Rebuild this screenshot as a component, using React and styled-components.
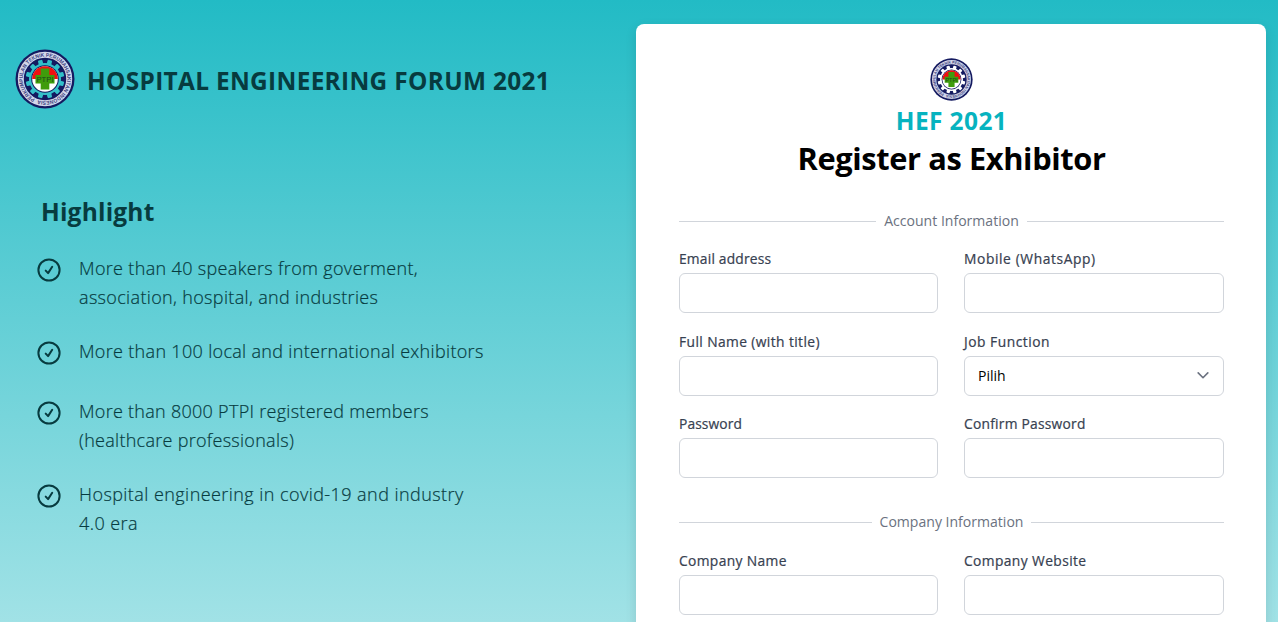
import React, { useId } from 'react';
import styled, { createGlobalStyle } from 'styled-components';

const GlobalStyle = createGlobalStyle`
  *, *::before, *::after { box-sizing: border-box; }
  html, body { margin: 0; height: 100%; overflow: hidden; }
  body { font-family: "Segoe UI", "Open Sans", "Noto Sans", sans-serif; }
`;

const Page = styled.main`
  display: grid;
  grid-template-columns: 636px 630px;
  height: 622px;
  overflow: hidden;
  background: linear-gradient(180deg, #22bbc5 0%, #a1e2e6 100%);
`;

const Intro = styled.section`
  display: flex;
  flex-direction: column;
  padding: 49px 0 0 15px;
  color: #073b3f;
`;

const Brand = styled.header`
  display: flex;
  align-items: center;
  gap: 12px;
  height: 60px;
`;

const BrandName = styled.h1`
  margin: 4px 0 0;
  font-size: 24.4px;
  line-height: 32px;
  font-weight: 700;
  letter-spacing: 0.33px;
  white-space: nowrap;
`;

const Highlights = styled.div`
  padding: 87px 0 0 22px;
`;

const HighlightsTitle = styled.h2`
  margin: 0 0 26px 4px;
  font-size: 24.5px;
  line-height: 32px;
  font-weight: 700;
  letter-spacing: 0.2px;
`;

const HighlightList = styled.ul`
  display: flex;
  flex-direction: column;
  gap: 25px;
  margin: 0;
  padding: 0;
  list-style: none;
`;

const HighlightItem = styled.li`
  display: flex;
  gap: 18px;
  min-height: ${(p) => (p.$single ? '35px' : '58px')};
  font-size: 18px;
  line-height: 29px;
  font-weight: 300;
  letter-spacing: ${(p) => p.$tracking}px;
  -webkit-text-stroke: 0.2px currentColor;
  white-space: nowrap;

  svg { flex: none; margin-top: 4px; }
`;

const Line = styled.span`
  display: block;
`;

const Card = styled.section`
  margin-top: 24px;
  height: 700px;
  padding: 34px 42px 0 43px;
  border-radius: 8px;
  background: #fff;
  box-shadow: 0 4px 12px rgba(0, 0, 0, 0.12);
`;

const CardHeader = styled.header`
  display: flex;
  flex-direction: column;
  align-items: center;
`;

const EventName = styled.div`
  margin-top: 4px;
  font-size: 24.5px;
  line-height: 32px;
  font-weight: 700;
  letter-spacing: 0.4px;
  color: #06b3bf;
`;

const CardTitle = styled.h2`
  margin: 1px 0 2px;
  font-size: 30.8px;
  line-height: 40px;
  font-weight: 700;
  letter-spacing: -0.38px;
  color: #000;
`;

const Divider = styled.div`
  display: flex;
  align-items: center;
  gap: 8px;
  height: 22px;
  margin-top: ${(p) => p.$top}px;
  color: #6b7280;
  font-size: 14.05px;
  line-height: 22px;

  &::before, &::after {
    content: '';
    flex: 1;
    height: 1px;
    background: #d1d5db;
  }
`;

const Fields = styled.div`
  display: grid;
  grid-template-columns: 259px 260px;
  column-gap: 26px;
  row-gap: 17.5px;
  margin-top: ${(p) => p.$top || 16}px;
`;

const Field = styled.label`
  display: flex;
  flex-direction: column;
  gap: 4px;
`;

const Label = styled.span`
  font-size: 13.8px;
  line-height: 21px;
  font-weight: 500;
  letter-spacing: ${(p) => p.$tracking}px;
  -webkit-text-stroke: 0.22px currentColor;
  color: #374151;
  white-space: nowrap;
`;

const Input = styled.input`
  width: 100%;
  height: 40px;
  border: 1px solid #d1d5db;
  border-radius: 6px;
  background: #fff;
  outline: none;
`;

const Select = styled.div`
  display: flex;
  align-items: center;
  justify-content: space-between;
  height: 40px;
  padding: 0 14px 0 13px;
  border: 1px solid #d1d5db;
  border-radius: 6px;
  font-size: 14px;
  color: #000;
`;

const teeth = Array.from({ length: 12 }, (_, i) => i * 30 + 15);

function Logo({ size }) {
  const id = useId().replace(/[^a-zA-Z0-9]/g, '');
  return (
    <svg width={size} height={size} viewBox="-30 -30 60 60">
      <defs>
        <mask id={`gear${id}`}>
          <rect x="-30" y="-30" width="60" height="60" fill="#fff" />
          <circle r="16" fill="#000" />
          {teeth.map((a) => (
            <rect key={a} x="-2.3" y="-19.4" width="4.6" height="6" rx="1" fill="#000" transform={`rotate(${a})`} />
          ))}
        </mask>
        <path id={`ring${id}`} d="M-10 19.8 A22.2 22.2 0 1 1 -9.9 19.85" />
      </defs>
      <circle r="29.5" fill="#141a60" mask={`url(#gear${id})`} />
      <circle r="24.2" fill="none" stroke="#d2d6ea" strokeWidth="6" />
      <text fontFamily="Liberation Sans, sans-serif" fontWeight="700" fontSize="5.4" fill="#3c4280">
        <textPath href={`#ring${id}`} textLength="136" lengthAdjust="spacingAndGlyphs">PERKUMPULAN TEKNIK PERUMAHSAKITAN INDONESIA</textPath>
      </text>
      <circle r="13.8" fill="#141a60" />
      <circle r="12.8" fill="#fff" />
      <path d="M-12.8 0 A12.8 12.8 0 0 1 12.8 0 Z" fill="#f01010" />
      <path d="M-4.3-10.5H4.3V-4H9.5V4.5H4.3V10.5H-4.3V4.5H-9.5V-4H-4.3Z" fill="#3f9c0c" />
      <text y="3" textAnchor="middle" fontFamily="Liberation Sans, sans-serif" fontSize="7.6" fill="#1c4a1c" textLength="17">PTPI</text>
    </svg>
  );
}

function CheckCircle() {
  return (
    <svg width="24" height="24" viewBox="0 0 24 24" fill="none" stroke="#073b3f" strokeWidth="2" strokeLinecap="round" strokeLinejoin="round">
      <circle cx="12" cy="12" r="10.6" />
      <path d="M8.7 12.6l2.4 2.5 4.1-6.3" />
    </svg>
  );
}

function Chevron() {
  return (
    <svg width="12" height="8" viewBox="0 0 12 8" fill="none" stroke="#6b7280" strokeWidth="1.6" strokeLinecap="round" strokeLinejoin="round">
      <path d="M1.2 0.9L6 5.7l4.8-4.8" />
    </svg>
  );
}

const highlights = [
  { tracking: 0.34, lines: ['More than 40 speakers from goverment,', 'association, hospital, and industries'] },
  { tracking: 0.32, lines: ['More than 100 local and international exhibitors'] },
  { tracking: 0.28, lines: ['More than 8000 PTPI registered members', '(healthcare professionals)'] },
  { tracking: 0.44, lines: ['Hospital engineering in covid-19 and industry', '4.0 era'] },
];

function TextField({ label, type = 'text', tracking = 0.2 }) {
  return (
    <Field>
      <Label $tracking={tracking}>{label}</Label>
      <Input type={type} />
    </Field>
  );
}

export default function App() {
  return (
    <>
      <GlobalStyle />
      <Page>
        <Intro>
          <Brand>
            <Logo size={60} />
            <BrandName>HOSPITAL ENGINEERING FORUM 2021</BrandName>
          </Brand>
          <Highlights>
            <HighlightsTitle>Highlight</HighlightsTitle>
            <HighlightList>
              {highlights.map(({ lines, tracking }) => (
                <HighlightItem key={lines[0]} $single={lines.length === 1} $tracking={tracking}>
                  <CheckCircle />
                  <div>{lines.map((line) => <Line key={line}>{line}</Line>)}</div>
                </HighlightItem>
              ))}
            </HighlightList>
          </Highlights>
        </Intro>
        <Card>
          <CardHeader>
            <Logo size={43} />
            <EventName>HEF 2021</EventName>
            <CardTitle>Register as Exhibitor</CardTitle>
          </CardHeader>
          <Divider $top={30}>Account Information</Divider>
          <Fields>
            <TextField label="Email address" type="email" tracking={0.2} />
            <TextField label="Mobile (WhatsApp)" tracking={0.6} />
            <TextField label="Full Name (with title)" tracking={0.4} />
            <Field>
              <Label $tracking={0.52}>Job Function</Label>
              <Select><span>Pilih</span><Chevron /></Select>
            </Field>
            <TextField label="Password" type="password" tracking={0.1} />
            <TextField label="Confirm Password" type="password" tracking={0.24} />
          </Fields>
          <Divider $top={33}>Company Information</Divider>
          <Fields $top={17}>
            <TextField label="Company Name" tracking={0.37} />
            <TextField label="Company Website" tracking={0.4} />
          </Fields>
        </Card>
      </Page>
    </>
  );
}
